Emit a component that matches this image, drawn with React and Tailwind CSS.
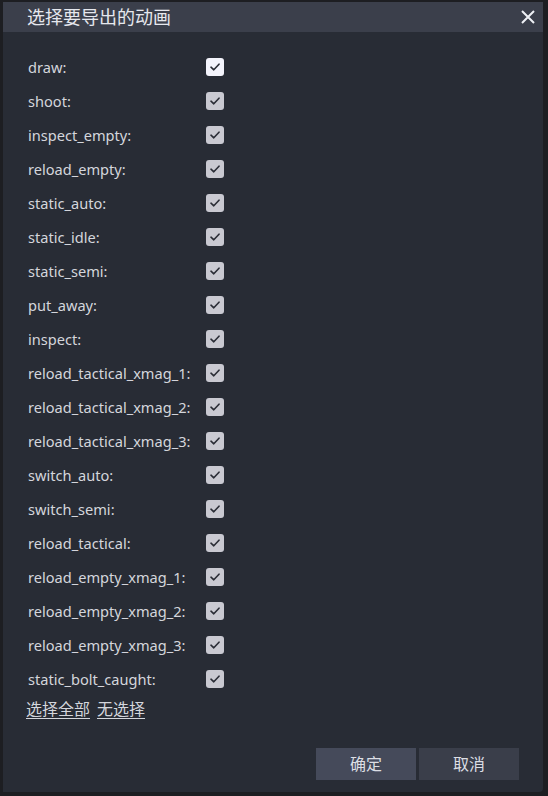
import React, { useState } from "react";

const ANIMS = [
  "draw",
  "shoot",
  "inspect_empty",
  "reload_empty",
  "static_auto",
  "static_idle",
  "static_semi",
  "put_away",
  "inspect",
  "reload_tactical_xmag_1",
  "reload_tactical_xmag_2",
  "reload_tactical_xmag_3",
  "switch_auto",
  "switch_semi",
  "reload_tactical",
  "reload_empty_xmag_1",
  "reload_empty_xmag_2",
  "reload_empty_xmag_3",
  "static_bolt_caught",
];

const CheckBox = ({ checked, focused, onClick }) => (
  <button
    onClick={onClick}
    className={`w-[18px] h-[18px] rounded-[3px] flex items-center justify-center ${
      focused ? "bg-[#f4f4fc]" : "bg-[#c9c9d1]"
    }`}
  >
    {checked && (
      <svg width="10" height="8" viewBox="0 0 10 8" fill="none">
        <path d="M1 4.2L3.8 6.8L9 1.2" stroke="#2a2d36" strokeWidth="1.6" strokeLinecap="round" strokeLinejoin="round" />
      </svg>
    )}
  </button>
);

export default function App() {
  const [checked, setChecked] = useState(ANIMS.map(() => true));

  const toggle = (i) => setChecked(checked.map((c, j) => (j === i ? !c : c)));

  return (
    <div
      className="w-[548px] h-[796px] bg-[#1d1e22] pt-[2px] pl-[3px] overflow-hidden"
      style={{ fontFamily: '"Noto Sans", "Noto Sans CJK SC", sans-serif' }}
    >
      <div className="w-[540px] h-[790px] bg-[#282c35] rounded-br-[4px] flex flex-col">
        {/* Title bar */}
        <div className="h-[30px] bg-[#3b3f4b] flex items-center justify-between pl-[24px] pr-[8px]">
          <span className="text-[18px] leading-none text-[#e6e8ee]">选择要导出的动画</span>
          <svg width="14" height="14" viewBox="0 0 14 14">
            <path d="M1 1L13 13M13 1L1 13" stroke="#eef0f5" strokeWidth="2" />
          </svg>
        </div>

        {/* Animation list */}
        <div className="pt-[18px] pl-[25px] flex flex-col">
          {ANIMS.map((name, i) => (
            <div key={name} className="h-[34px] flex items-center">
              <span className="w-[178px] pt-[1px] text-[14.6px] text-[#d4d6dc]">{name}:</span>
              <CheckBox checked={checked[i]} focused={i === 0} onClick={() => toggle(i)} />
            </div>
          ))}
          <div className="h-[28px] flex items-center gap-[7px] text-[16px] text-[#d4d6dc] -ml-[2px] -mt-[1px]">
            <button className="underline underline-offset-[3px]" onClick={() => setChecked(ANIMS.map(() => true))}>
              选择全部
            </button>
            <button className="underline underline-offset-[3px]" onClick={() => setChecked(ANIMS.map(() => false))}>
              无选择
            </button>
          </div>
        </div>

        {/* Footer buttons */}
        <div className="mt-auto pb-[12px] pr-[24px] flex justify-end gap-[3px]">
          <button className="w-[100px] h-[32px] bg-[#454a5a] text-[16px] text-[#dcdee4]">确定</button>
          <button className="w-[100px] h-[32px] bg-[#3a3e4a] text-[16px] text-[#dcdee4]">取消</button>
        </div>
      </div>
    </div>
  );
}
